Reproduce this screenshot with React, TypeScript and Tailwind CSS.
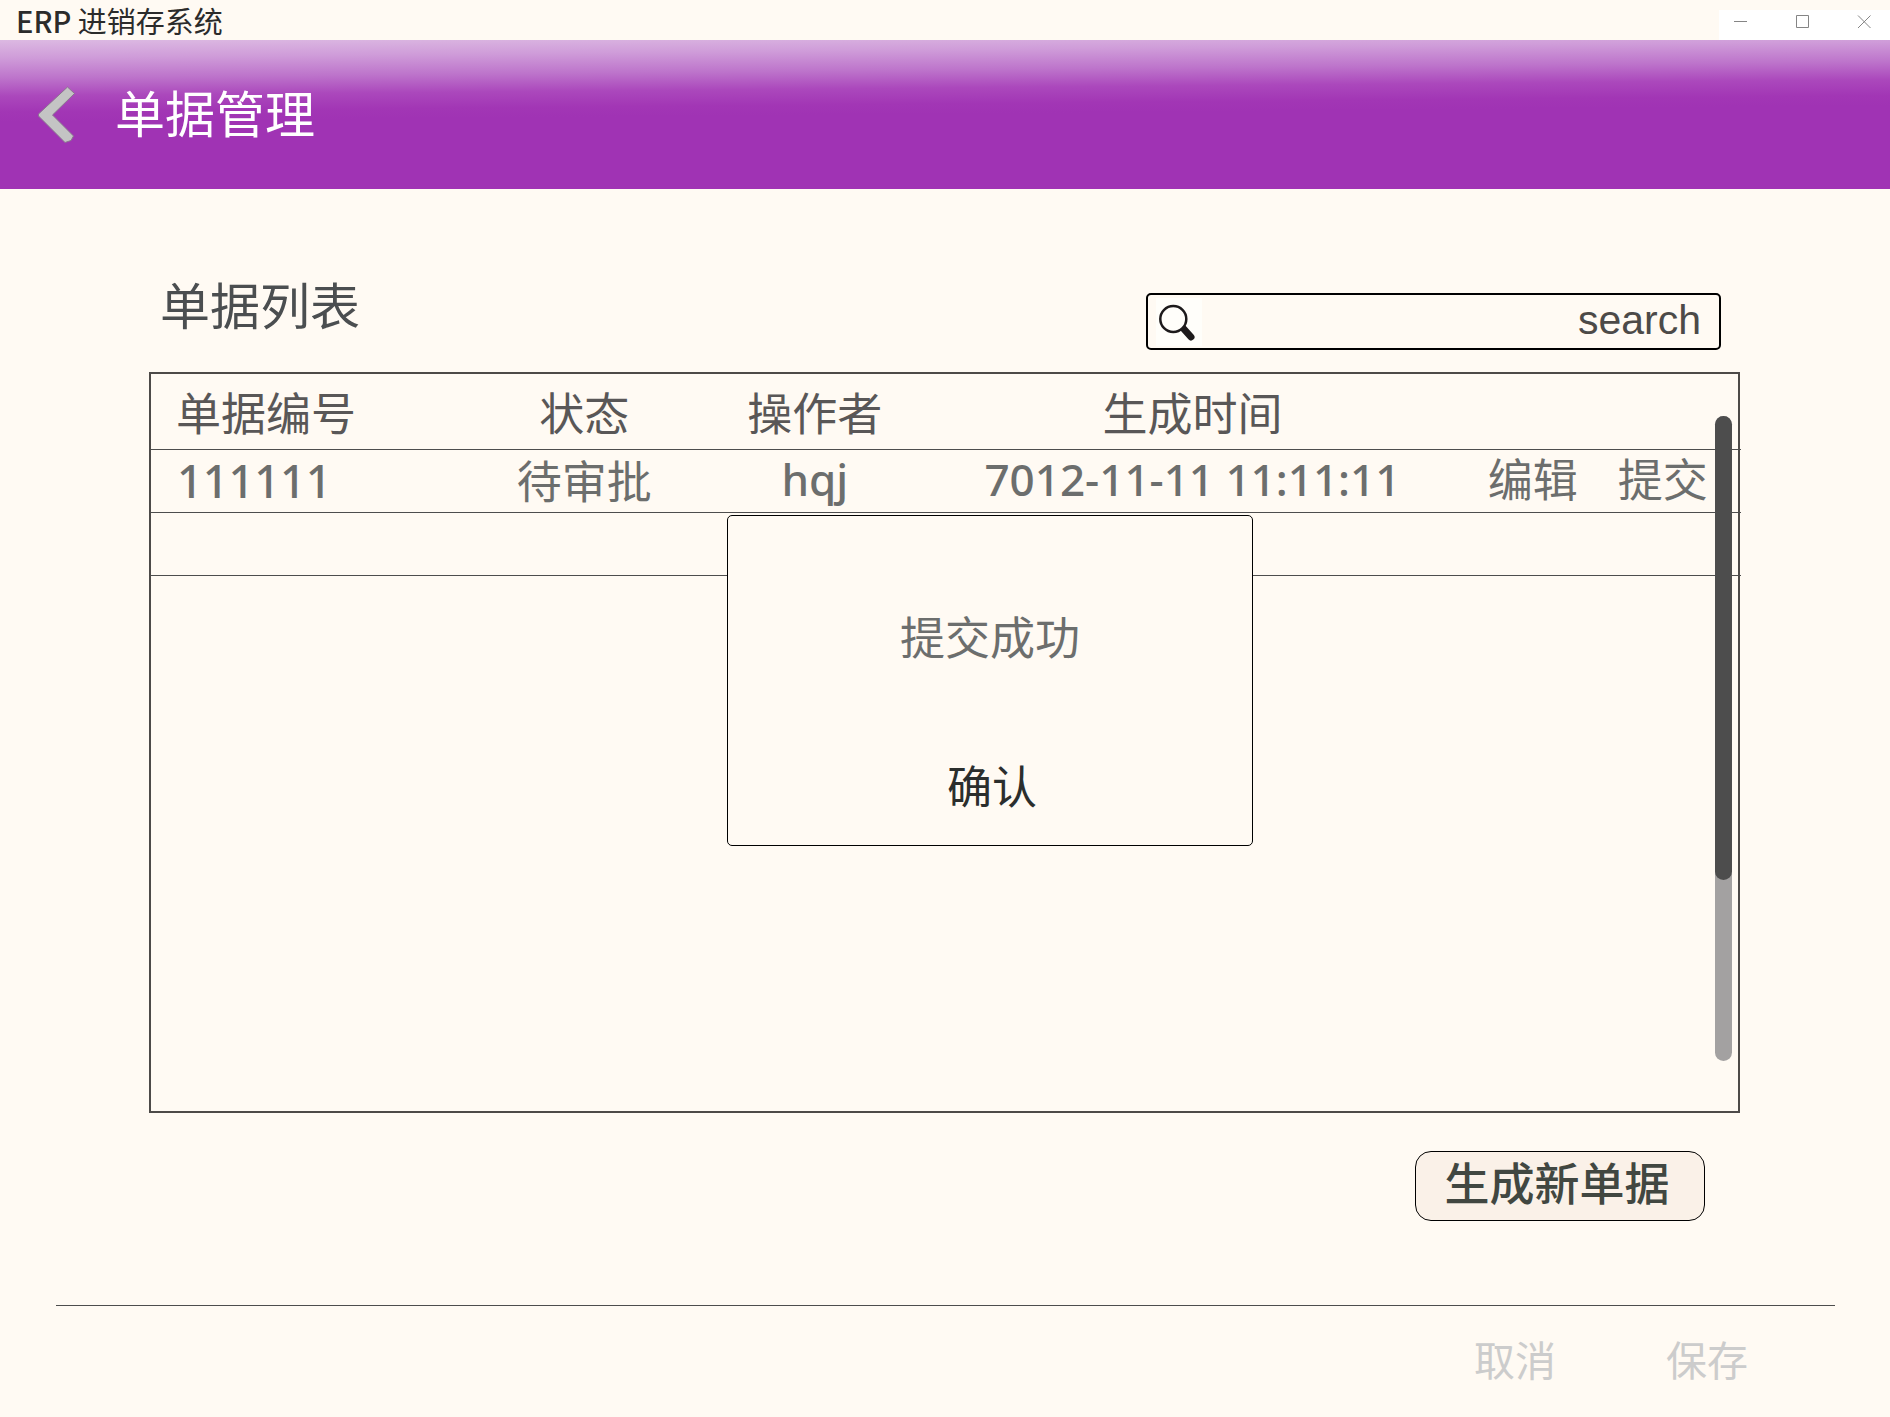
const headers = ['单据编号', '状态', '操作者', '生成时间'];

function TitleBar() {
  return (
    <div className="flex h-10 items-end justify-between">
      <h1 className="pb-1 pl-4 text-[29px] leading-8 text-[#2b2b2b]">
        <span className="font-medium">ERP</span> 进销存系统
      </h1>
      <div className="flex h-[30px] w-[171px] items-start justify-between bg-white pt-[4px] pr-[18px] pl-[14px] text-[#858585]">
        <button type="button" aria-label="最小化">
          <svg width="16" height="16" viewBox="0 0 16 16" className="block" stroke="currentColor" fill="none">
            <path d="M1 7.5H14" />
          </svg>
        </button>
        <button type="button" aria-label="最大化">
          <svg width="16" height="16" viewBox="0 0 16 16" className="block" stroke="currentColor" fill="none">
            <path d="M1.500 1.500H13.500V13.500H1.500Z" />
          </svg>
        </button>
        <button type="button" aria-label="关闭">
          <svg width="16" height="16" viewBox="0 0 16 16" className="block" stroke="currentColor" fill="none">
            <path d="M2 1.500L14.500 14M14.500 1.500L2 14" />
          </svg>
        </button>
      </div>
    </div>
  );
}

function Header() {
  return (
    <header className="flex h-[149px] items-start bg-[linear-gradient(179.5deg,#dcb9e2_0px,#cf9cd9_18px,#bd74cb_38px,#ab48bc_56px,#a236b5_72px,#a033b4_82px)] pt-[35px] pl-[37px]">
      <button type="button" aria-label="返回" className="mt-[10px]">
        <svg width="40" height="60" viewBox="0 0 40 60" className="block" fill="#c4c4c4" stroke="#8b7590" strokeWidth="1">
          <path d="M30.500 2L37.500 8.500L15.500 30L36.500 51L34 55.500L28 57.500L1.500 31V29Z" />
        </svg>
      </button>
      <h2 className="ml-[38px] text-[50px] leading-[72px] text-white">单据管理</h2>
    </header>
  );
}

export default function App() {
  return (
    <div className={'min-h-screen bg-[#fffaf3] font-["Noto_Sans_CJK_SC",sans-serif]'}>
      <TitleBar />
      <Header />

      <main className="pr-[150px] pl-[149px]">
        <div className="flex h-[183px] items-end justify-between pr-[19px] pb-[22px] pl-[11px]">
          <h3 className="mb-3 text-[50px] leading-[70px] text-[#4b4e50]">单据列表</h3>
          <div className="flex h-[57px] w-[575px] items-center rounded-[5px] border-2 border-black pr-[18px] pl-[8px]">
            <svg width="46" height="48" viewBox="0 0 46 48" className="shrink-0">
              <rect width="46" height="48" fill="#fffefa" />
              <path d="M26.500 29.500L35 39" stroke="#1d1a1b" strokeWidth="7" strokeLinecap="round" />
              <circle cx="17.300" cy="21" r="13" fill="#fffefa" stroke="#1d1a1b" strokeWidth="2.500" />
            </svg>
            <input
              type="text"
              aria-label="search"
              placeholder="search"
              className='min-w-0 flex-1 bg-transparent pb-1 text-right font-["Liberation_Sans",sans-serif] text-[41px] leading-[46px] outline-none placeholder:text-[#4c4a48]'
            />
          </div>
        </div>

        <section className="relative h-[741px] border-2 border-[#4d4a48]">
          <table className="w-[calc(100%+3px)] table-fixed border-collapse text-[45px] leading-[56px]">
            <colgroup>
              <col className="w-[20.5%]" />
              <col className="w-[13.5%]" />
              <col className="w-[15.5%]" />
              <col className="w-[32%]" />
              <col />
            </colgroup>
            <thead>
              <tr className="h-[75px] border-b border-[#4d4d4d] text-[#595757]">
                {headers.map((h) => (
                  <th key={h} scope="col" className="pt-0.5 font-normal first:pl-[25px] first:text-left">
                    {h}
                  </th>
                ))}
                <td />
              </tr>
            </thead>
            <tbody className="text-[#6c6e6d]">
              <tr className="h-[63px] border-b border-[#4d4d4d] text-center">
                <td className='pl-[26px] text-left font-["Noto_Sans",sans-serif] text-[45px] font-medium'>111111</td>
                <td className="pb-0.5">待审批</td>
                <td className='pb-1 font-["Noto_Sans",sans-serif] text-[44px] font-medium'>hqj</td>
                <td className='pb-1 font-["Noto_Sans",sans-serif] text-[44px] font-medium'>7012-11-11 11:11:11</td>
                <td className="pb-1.5">
                  <div className="flex gap-10 pl-[41px]">
                    <button type="button" className="whitespace-nowrap">编辑</button>
                    <button type="button" className="whitespace-nowrap">提交</button>
                  </div>
                </td>
              </tr>
              <tr className="h-[63px] border-b border-[#4d4d4d]">
                <td colSpan={5} />
              </tr>
            </tbody>
          </table>

          <div className="absolute top-[42px] right-[6px] h-[645px] w-[17px] rounded-full bg-[#a3a1a1]">
            <div className="h-[464px] rounded-full bg-[#4d4d4d]" />
          </div>

          <div
            role="dialog"
            aria-label="提交成功"
            className="absolute top-[141px] left-[576px] flex h-[331px] w-[526px] flex-col items-center justify-between rounded-[5px] border border-black bg-[#fffaf3] pt-[88px] pb-[28px] text-[45px] leading-[64px]"
          >
            <p className="text-[#6c6e6d]">提交成功</p>
            <button type="button" className="pl-1 text-[#2b2e2d]">确认</button>
          </div>
        </section>

        <div className="flex justify-end pt-[38px] pr-[35px]">
          <button
            type="button"
            className="h-[70px] w-[290px] rounded-[16px] border border-black bg-[#faf1e8] pr-1.5 pb-2 text-[45px] leading-[60px] font-medium text-[#414741]"
          >
            生成新单据
          </button>
        </div>
      </main>

      <footer className="mr-[55px] ml-[56px] mt-[84px] flex justify-end gap-[110px] border-t border-[#4d4d4d] pt-[22px] pr-[87px] text-[41px] leading-[60px] text-[#cccccc]">
        <button type="button">取消</button>
        <button type="button">保存</button>
      </footer>
    </div>
  );
}
